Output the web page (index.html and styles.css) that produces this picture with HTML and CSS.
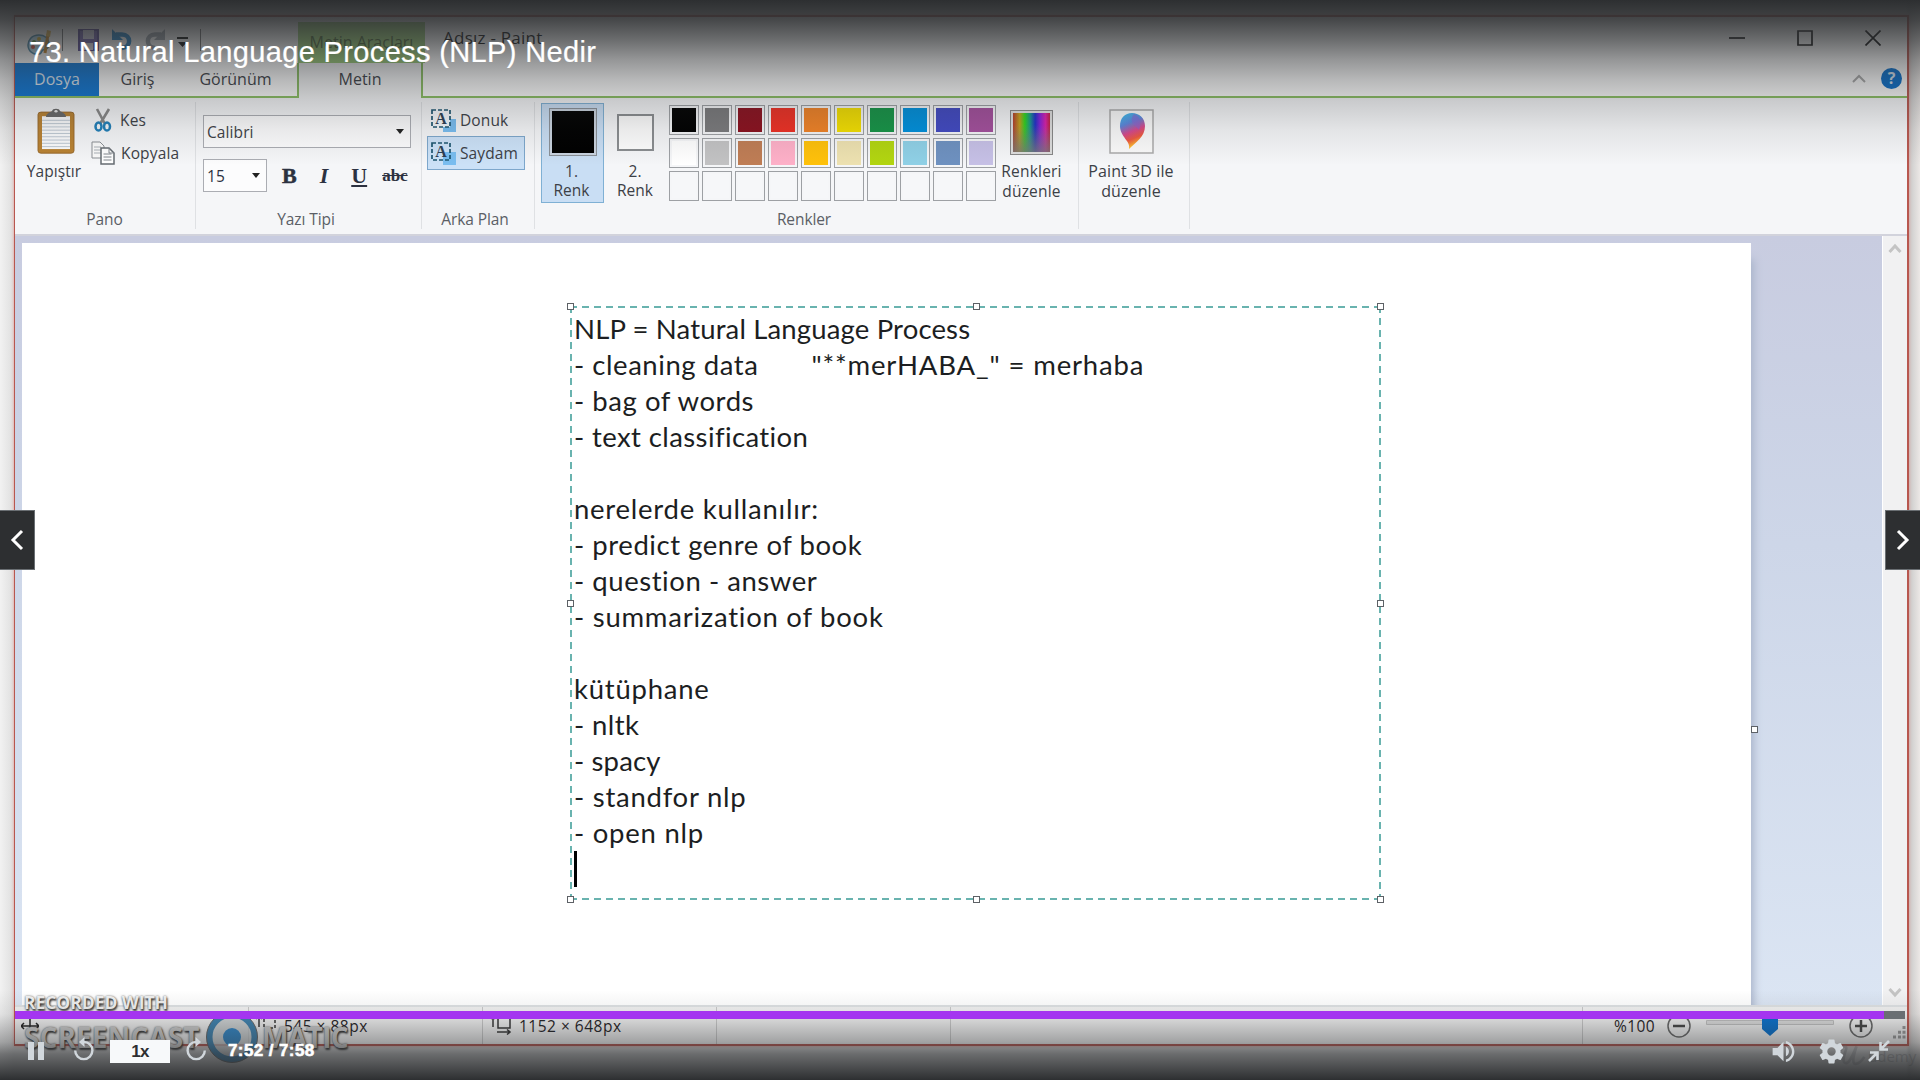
FILE: index.html
```html
<!DOCTYPE html>
<html lang="tr">
<head>
<meta charset="utf-8">
<title>73. Natural Language Process (NLP) Nedir</title>
<link rel="stylesheet" href="styles.css">
</head>
<body>
<main class="player">
  <section class="window">
    <header class="titlebar">
      <div class="quick">
        <svg class="q-paint" width="26" height="28" viewBox="0 0 26 28"><path d="M12 6C4 6 1 12 1 16c0 6 5 10 11 9 3 0 2-3 4-4 4-1 6-2 6-6 0-6-5-9-10-9z" fill="#b4d9e8" stroke="#4d8aa9" stroke-width="1.500"/><circle cx="7" cy="13" r="2" fill="#5c9b45"/><circle cx="12" cy="10" r="2" fill="#d8b130"/><circle cx="6" cy="18" r="2" fill="#cf5440"/><path d="M18 24l3-19" stroke="#c5872d" stroke-width="3"/><path d="M19 7l1-6 4 1-1 6z" fill="#e8b850"/></svg>
        <i class="bar"></i>
        <svg class="q-save" width="21" height="22" viewBox="0 0 21 22"><path d="M1 1h19v20H1z" fill="#7a6ab4" stroke="#5c4d98" stroke-width="2"/><path d="M5 1h11v9H5z" fill="#d8d4e6"/><path d="M6 14h9v7H6z" fill="#e9e7f0"/></svg>
        <svg class="q-undo" width="22" height="22" viewBox="0 0 22 22"><path d="M5 5.500h6c9.500 0 9.500 13 0 13.500" fill="none" stroke="#2a88cc" stroke-width="4.500"/><path d="M1 0v11h11z" fill="#2a88cc"/></svg>
        <svg class="q-redo" width="22" height="22" viewBox="0 0 22 22"><path d="M17 5.500h-6c-9.500 0-9.500 13 0 13.500" fill="none" stroke="#a2a9b1" stroke-width="4.500"/><path d="M21 0v11H10z" fill="#a2a9b1"/></svg>
        <svg class="q-more" width="11" height="11" viewBox="0 0 11 11"><path d="M0 0h11v2H0zM1 5h9L5.500 10z" fill="#111"/></svg>
        <i class="bar"></i>
      </div>
      <div class="context">Metin Araçları</div>
      <div class="caption">Adsız - Paint</div>
      <div class="winbtns">
        <svg width="16" height="16" viewBox="0 0 16 16"><path d="M0 8h16" stroke="#111" stroke-width="1.700"/></svg>
        <svg width="16" height="16" viewBox="0 0 16 16"><path d="M1 1h14v14H1z" fill="none" stroke="#111" stroke-width="1.700"/></svg>
        <svg width="16" height="16" viewBox="0 0 16 16"><path d="M.5.5l15 15m0-15l-15 15" stroke="#111" stroke-width="1.700"/></svg>
      </div>
    </header>
    <nav class="tabs">
      <span class="tab file">Dosya</span><span class="tab home">Giriş</span><span class="tab view">Görünüm</span><span class="tab active">Metin</span>
      <div class="tabright">
        <svg width="14" height="9" viewBox="0 0 14 9"><path d="M1 8l6-6 6 6" fill="none" stroke="#aaa" stroke-width="2"/></svg>
        <b class="help">?</b>
      </div>
    </nav>
    <div class="ribbon">
      <section class="group pano">
        <div class="body">
          <div class="paste">
            <svg width="38" height="46" viewBox="0 0 38 56" preserveAspectRatio="none"><rect x="1" y="5" width="36" height="50" rx="3" fill="#b98232"/><rect x="1" y="5" width="36" height="50" rx="3" fill="none" stroke="#95662a"/><path d="M5 10h28v40H5z" fill="#fbfcfd"/><path d="M5 15h28M5 19h28M5 23h28M5 27h28M5 31h28M5 35h28M5 39h28M5 43h28M5 47h28" stroke="#b9c5d0"/><path d="M9 11c0-4 4-6 6-7 0-4 8-4 8 0 2 1 6 3 6 7z" fill="#696969"/><circle cx="19" cy="4" r="1.600" fill="#e8e8e8"/></svg>
            <span>Yapıştır</span>
          </div>
          <div class="clips">
            <div class="row"><svg width="22" height="24" viewBox="0 0 22 24"><path d="M5 1l8 15M17 1L8 16" stroke="#888" stroke-width="2.600" fill="none"/><ellipse cx="6.500" cy="18.500" rx="3" ry="4" fill="none" stroke="#217fb8" stroke-width="2.500"/><ellipse cx="15" cy="18.500" rx="3" ry="4" fill="none" stroke="#217fb8" stroke-width="2.500"/></svg><span>Kes</span></div>
            <div class="row"><svg width="24" height="24" viewBox="0 0 24 24"><path d="M1 1h8l4 4v12H1z" fill="#fafafa" stroke="#8b8f94"/><path d="M3 6h7M3 9h7M3 12h7" stroke="#aab0b6"/><path d="M10 7h8l5 5v11H10z" fill="#fff" stroke="#666c72" stroke-width="1.500"/><path d="M18 7v5h5M12.500 13h8M12.500 16h8M12.500 19h8" fill="none" stroke="#80868c"/></svg><span>Kopyala</span></div>
          </div>
        </div>
        <footer>Pano</footer>
      </section>
      <section class="group font">
        <div class="body">
          <div class="combo wide">Calibri<i></i></div>
          <div class="line">
            <div class="combo small">15<i></i></div>
            <span class="f-b">B</span><span class="f-i">I</span><span class="f-u">U</span><span class="f-s">abc</span>
          </div>
        </div>
        <footer>Yazı Tipi</footer>
      </section>
      <section class="group back">
        <div class="body">
          <div class="opt"><svg width="25" height="23" viewBox="0 0 25 23"><path d="M12 10h13v13H12z" fill="#79bdf0"/><path d="M1 1h18v17H1z" fill="#f4f7fb" stroke="#1d5570" stroke-width="1.700" stroke-dasharray="4 2"/><text x="10" y="15" text-anchor="middle" class="glyph">A</text></svg><span>Donuk</span></div>
          <div class="opt on"><svg width="25" height="23" viewBox="0 0 25 23"><path d="M12 10h13v13H12z" fill="#79bdf0"/><path d="M1 1h18v17H1z" fill="none" stroke="#1d5570" stroke-width="1.700" stroke-dasharray="4 2"/><text x="10" y="15" text-anchor="middle" class="glyph">A</text></svg><span>Saydam</span></div>
        </div>
        <footer>Arka Plan</footer>
      </section>
      <section class="group colors">
        <div class="body">
          <div class="slot one"><i></i><span>1.<br>Renk</span></div>
          <div class="slot two"><i></i><span>2.<br>Renk</span></div>
          <div class="palette">
            <i class="c1"></i><i class="c2"></i><i class="c3"></i><i class="c4"></i><i class="c5"></i><i class="c6"></i><i class="c7"></i><i class="c8"></i><i class="c9"></i><i class="c10"></i>
            <i class="c11"></i><i class="c12"></i><i class="c13"></i><i class="c14"></i><i class="c15"></i><i class="c16"></i><i class="c17"></i><i class="c18"></i><i class="c19"></i><i class="c20"></i>
            <i></i><i></i><i></i><i></i><i></i><i></i><i></i><i></i><i></i><i></i>
          </div>
          <div class="big edit"><i class="rainbow"></i><span>Renkleri<br>düzenle</span></div>
        </div>
        <footer>Renkler</footer>
      </section>
      <section class="group p3d">
        <div class="body">
          <div class="big"><svg width="45" height="45" viewBox="0 0 45 45"><defs><linearGradient id="drop" x1="0" y1="0" x2=".3" y2="1"><stop offset="0" stop-color="#38c5ee"/><stop offset=".35" stop-color="#5b86dc"/><stop offset=".6" stop-color="#d7488c"/><stop offset=".8" stop-color="#ee5840"/><stop offset="1" stop-color="#ffc52c"/></linearGradient></defs><path d="M1 1h43v43H1z" fill="#fafafa" stroke="#aaa" stroke-width="1.500"/><path d="M20 40c2-8-9-12-9-23C11 9 16 4 23 4s13 5 13 13c0 11-9 16-16 23z" fill="url(#drop)"/><path d="M25 5c6 2 8 9 5 16-4-5-11-8-5-16z" fill="#8a63d2" opacity=".55"/></svg><span>Paint 3D ile<br>düzenle</span></div>
        </div>
      </section>
    </div>
    <div class="workspace">
      <div class="paper">
        <div class="textbox">
          <i class="h tl"></i><i class="h tc"></i><i class="h tr"></i><i class="h ml"></i><i class="h mr"></i><i class="h bl"></i><i class="h bc"></i><i class="h br"></i>
          <p class="heading">NLP = Natural Language Process</p>
          <p>- cleaning data<span class="sample">"**merHABA_" = merhaba</span></p>
          <p>- bag of words</p>
          <p class="snug">- text classification</p>
          <p></p>
          <p class="loose">nerelerde kullanılır:</p>
          <p>- predict genre of book</p>
          <p>- question - answer</p>
          <p class="loose">- summarization of book</p>
          <p></p>
          <p class="loose">kütüphane</p>
          <p class="snug">- nltk</p>
          <p class="heading">- spacy</p>
          <p class="loose">- standfor nlp</p>
          <p class="loose">- open nlp</p>
          <p class="caret"></p>
        </div>
        <i class="h edge"></i>
      </div>
      <div class="scroll">
        <svg width="14" height="12" viewBox="0 0 14 12"><path d="M1.500 9L7 3l5.500 6" fill="none" stroke="#c4c4c4" stroke-width="3"/></svg>
        <svg width="14" height="12" viewBox="0 0 14 12"><path d="M1.500 3L7 9l5.500-6" fill="none" stroke="#c4c4c4" stroke-width="3"/></svg>
      </div>
    </div>
    <footer class="status">
      <div class="cell s1"><svg width="18" height="18" viewBox="0 0 18 18"><path d="M0 9h18M9 0v14M3 6L0 9l3 3M15 6l3 3-3 3" fill="none" stroke="#222" stroke-width="1.500"/></svg></div>
      <div class="cell s2"><svg width="21" height="19" viewBox="0 0 21 19"><path d="M3 0v11M0 3l3-3 3 3" fill="none" stroke="#333" stroke-width="1.500"/><path d="M8 0h11v12H8z" fill="none" stroke="#333" stroke-width="1.500" stroke-dasharray="3 2"/></svg><span>545 × 88px</span></div>
      <div class="cell s3"><svg width="21" height="19" viewBox="0 0 21 19"><path d="M2 0v11M0 3l2-3 2 3M6 16h13M16 13.500l3 2.500-3 2.500" fill="none" stroke="#333" stroke-width="1.500"/><path d="M7 0h12v12H7z" fill="none" stroke="#333" stroke-width="1.500"/></svg><span>1152 × 648px</span></div>
      <div class="cell s4"></div>
      <div class="cell s5"></div>
      <div class="zoombar">
        <span>%100</span>
        <svg width="24" height="24" viewBox="0 0 24 24"><circle cx="12" cy="12" r="11" fill="#eee" fill-opacity=".5" stroke="#666" stroke-width="1.500"/><path d="M6 12h12" stroke="#444" stroke-width="2.500"/></svg>
        <svg class="track" width="128" height="22" viewBox="0 0 128 22"><path d="M.5 5.500h127v4H.5z" fill="#ddd" stroke="#c0c0c0"/><path d="M56 0h16v14l-8 7-8-7z" fill="#0870cc"/></svg>
        <svg width="24" height="24" viewBox="0 0 24 24"><circle cx="12" cy="12" r="11" fill="#eee" fill-opacity=".5" stroke="#666" stroke-width="1.500"/><path d="M6 12h12M12 6v12" stroke="#444" stroke-width="2.500"/></svg>
        <svg class="grip" width="13" height="13" viewBox="0 0 13 13"><path d="M9.500 0h3v3h-3zM5 4.700h3v3H5zm4.500 0h3v3h-3zM0 9.500h3v3H0zm5 0h3v3H5zm4.500 0h3v3h-3z" fill="#999"/></svg>
      </div>
    </footer>
  </section>

  <div class="recorder">
    <div class="rec-top">RECORDED WITH</div>
    <div class="rec-main"><span class="sc">SCREENCAST</span><svg width="54" height="54" viewBox="0 0 54 54"><circle cx="27" cy="27" r="22.500" fill="#c4c9cb" fill-opacity=".75" stroke="#3f83b0" stroke-width="6"/><circle cx="27" cy="27" r="25.500" fill="none" stroke="#666"/><circle cx="27" cy="27" r="9" fill="#3286c6"/></svg><span class="mt">MATIC</span></div>
  </div>
  <div class="brand"><svg width="30" height="26" viewBox="0 0 34 26"><path d="M1 9c4-8 10-9 8-3S4 21 9 21 18 8 21 2c-3 9-6 20-1 20s8-5 10-8" fill="none" stroke="#8b8b8f" stroke-width="3"/></svg><span>ûdemy</span></div>

  <div class="shade-top"></div>
  <div class="shade-bottom"></div>
  <h1 class="title">73. Natural Language Process (NLP) Nedir</h1>
  <button class="nav prev"><svg width="14" height="22" viewBox="0 0 14 22"><path d="M12 2L3 11l9 9" fill="none" stroke="#fff" stroke-width="3"/></svg></button>
  <button class="nav next"><svg width="14" height="22" viewBox="0 0 14 22"><path d="M2 2l9 9-9 9" fill="none" stroke="#fff" stroke-width="3"/></svg></button>
  <div class="bottom">
    <div class="progress"><div class="played"></div></div>
    <div class="controls">
      <svg class="pause" width="16" height="18" viewBox="0 0 16 18"><path d="M0 0h6v18H0zM10 0h6v18h-6z" fill="#d1d7dc"/></svg>
      <svg class="rew" width="22" height="25" viewBox="0 0 22 25"><path d="M2.200 13.500a8.600 8.600 0 1 0 8.600-8.600" fill="none" stroke="#d1d7dc" stroke-width="2.400"/><path d="M11.500 0v10L6 5z" fill="#d1d7dc"/></svg>
      <button class="rate">1x</button>
      <svg class="fwd" width="22" height="25" viewBox="0 0 22 25"><path d="M19.800 13.500a8.600 8.600 0 1 1-8.600-8.600" fill="none" stroke="#d1d7dc" stroke-width="2.400"/><path d="M10.500 0v10L16 5z" fill="#d1d7dc"/></svg>
      <span class="time">7:52 / 7:58</span>
      <div class="right">
        <svg width="29" height="29" viewBox="0 0 24 24"><path d="M3 9v6h4l5 5V4L7 9H3zm13.500 3A4.500 4.500 0 0 0 14 7.970v8.050c1.480-.73 2.500-2.250 2.500-4.020zM14 3.230v2.060c2.890.86 5 3.540 5 6.710s-2.110 5.850-5 6.710v2.060c4.010-.91 7-4.490 7-8.770s-2.990-7.860-7-8.770z" fill="#d1d7dc"/></svg>
        <svg width="29" height="29" viewBox="0 0 24 24"><path d="M19.430 12.980c.04-.32.07-.64.07-.98s-.03-.66-.07-.98l2.110-1.650c.19-.15.24-.42.12-.64l-2-3.460c-.12-.22-.39-.3-.61-.22l-2.490 1c-.52-.4-1.080-.73-1.690-.98l-.38-2.650A.49.490 0 0 0 14 2h-4c-.25 0-.46.18-.49.420l-.38 2.650c-.61.25-1.170.59-1.690.98l-2.490-1c-.23-.09-.49 0-.61.220l-2 3.460c-.13.22-.07.49.12.64l2.110 1.650c-.04.32-.07.65-.07.98s.03.66.07.98l-2.110 1.650c-.19.15-.24.42-.12.640l2 3.460c.12.22.39.3.61.22l2.490-1c.52.4 1.080.73 1.690.98l.38 2.650c.03.24.24.42.49.42h4c.25 0 .46-.18.49-.42l.38-2.650c.61-.25 1.170-.59 1.690-.98l2.490 1c.23.09.49 0 .61-.22l2-3.460c.12-.22.07-.49-.12-.64l-2.110-1.650zM12 15.500A3.500 3.500 0 1 1 12 8.500a3.500 3.500 0 0 1 0 7z" fill="#d1d7dc"/></svg>
        <svg width="22" height="22" viewBox="0 0 22 22"><path d="M21 1l-8 8M12.500 2v7.500H20M1 21l8-8M2 12.500h7.500V20" fill="none" stroke="#d1d7dc" stroke-width="2.600"/></svg>
      </div>
    </div>
  </div>
</main>
</body>
</html>
```
FILE: styles.css
```css
* { box-sizing: border-box; }
body { margin: 0; background: #2d2f31; }
p, h1 { margin: 0; font-weight: 400; }
svg { display: block; flex: none; }
button { margin: 0; padding: 0; }

.player {
  position: relative; width: 1920px; height: 1080px; overflow: hidden;
  padding: 15px 11px 35px 14px;
  background: linear-gradient(90deg, #f2f2f2 0, #dedede 14px, #dedede 1906px, #c9c9c9 1909px, #ece8e6 1920px);
  font-family: "Open Sans", "Noto Sans", sans-serif; font-size: 15.5px; color: #3c4046;
}
.window {
  display: flex; flex-direction: column; width: 1895px; height: 1031px;
  border: 2px solid #b8574f; border-left-width: 1px; background: #fff;
  box-shadow: 0 0 3px #e79a92;
}

/* title bar */
.titlebar { display: flex; height: 46px; color: #111; }
.quick { display: flex; width: 283px; padding: 12px 0 0 12px; align-items: flex-start; }
.quick .bar { width: 1px; height: 22px; background: #777; }
.q-paint { margin-right: 9px; }
.q-save { margin: 0 12px 0 15px; }
.q-undo { margin-right: 11px; }
.q-redo { margin-right: 11px; }
.q-more { margin: 8px 12px 0 0; }
.context { width: 127px; margin-top: 5px; padding-top: 9px; background: #9dd07a; color: #4f6b3a; font-size: 16px; text-align: center; white-space: nowrap; }
.caption { padding: 9px 0 0 18px; font-size: 17px; letter-spacing: .25px; }
.winbtns { display: flex; margin: 13px 26px 0 auto; gap: 52px; }

/* tabs */
.tabs { display: flex; height: 35px; font-size: 16px; line-height: 33px; background: linear-gradient(#8bc063, #8bc063) bottom / 100% 2px no-repeat #fff; text-align: center; }
.tab.file { width: 84px; background: #0f76d4; color: #dfe9f4; height: 33px; }
.tab.home { width: 77px; }
.tab.view { width: 121px; padding-right: 2px; }
.tab.active { width: 126px; border: 2px solid #8bc063; border-width: 0 2px; background: #f6f7f8; }
.tabright { display: flex; margin-left: auto; align-items: center; gap: 15px; padding: 0 5px 4px 0; }
.help { width: 21px; height: 21px; border-radius: 50%; background: #0a6fcc; color: #d8e6f3; font-size: 16px; line-height: 21px; }

/* ribbon */
.ribbon { display: flex; height: 138px; background: #f5f6f8; border-bottom: 2px solid #d2d3dc; }
.group { display: flex; flex-direction: column; border-right: 1px solid #dfe1e4; margin: 4px 0 5px; }
.group .body { height: 110px; }
.group footer { padding-right: 5px; text-align: center; line-height: 20px; color: #5b5f66; letter-spacing: -.1px; }
.pano { width: 181px; }
.pano .body { display: flex; }
.pano footer { padding-right: 1px; }
.paste { display: flex; flex-direction: column; align-items: center; width: 78px; padding-top: 6px; line-height: 34px; letter-spacing: .1px; }
.paste svg { margin-left: 3px; }
.clips { padding-top: 3px; margin-left: -2px; }
.row { display: flex; align-items: center; height: 33px; gap: 6px; line-height: 24px; letter-spacing: .15px; }
.row:first-child { height: 29px; padding-left: 1px; margin-bottom: 2px; }
.font { width: 226px; }
.font .body { padding: 13px 10px 0 7px; }
.font .combo { letter-spacing: .1px; }
.combo { display: flex; justify-content: space-between; align-items: center; height: 33px; padding: 0 6px 0 3px; border: 1px solid #abadb3; background: #fcfcfd; }
.combo i { border: 4px solid transparent; border-top: 5px solid #222; border-bottom: 0; }
.combo.small { width: 64px; padding-left: 3px; }
.line { display: flex; margin-top: 11px; align-items: center; font-family: "Liberation Serif", serif; font-size: 22px; color: #2c3140; }
.line .combo { font: 15.5px "Open Sans", sans-serif; }
.f-b { margin-left: 15px; font-weight: 700; -webkit-text-stroke: .5px; }
.f-i { margin-left: 23px; font-style: italic; font-weight: 700; }
.f-u { margin-left: 23px; font-weight: 700; text-decoration: underline; }
.f-s { margin-left: 15px; font-size: 17px; font-weight: 700; text-decoration: line-through; }
.back { width: 113px; }
.back .body { padding: 2px 7px 0 5px; }
.back footer { padding-right: 6px; }
.opt { display: flex; align-items: center; height: 32px; gap: 4px; padding-left: 3px; border: 1px solid transparent; letter-spacing: .1px; }
.opt.on { width: 98px; height: 34px; background: #cbe1f7; border-color: #7da7cc; }
.glyph { font: 700 16px "Liberation Serif", serif; fill: #2d3f55; }
.colors { width: 544px; }
.colors .body { display: flex; padding-left: 6px; }
.slot { display: flex; flex-direction: column; align-items: center; width: 63px; text-align: center; line-height: 19px; }
.slot.one { height: 100px; margin-top: 1px; padding-top: 4px; border: 1px solid #7fb0d4; background: #c9def4; }
.slot.one span { padding-right: 2px; }
.slot.one i { width: 48px; height: 48px; margin-bottom: 6px; border: 1px solid #8a9097; background: #000; box-shadow: inset 0 0 0 2px #c9d3df; }
.slot.two { padding-top: 12px; }
.slot.two span { padding-right: 1px; }
.slot.two i { width: 37px; height: 37px; margin-bottom: 11px; border: 2px solid #8a8d90; background: #fdfdfd; }
.palette { display: grid; grid-template-columns: repeat(10, 30px); grid-auto-rows: 30px; gap: 3px; padding: 3px 0 0 2px; }
.palette i { border: 1.500px solid #9da0a4; padding: 2px; background: #f6f7f9; background-clip: content-box; }
.big { display: flex; flex-direction: column; align-items: center; text-align: center; line-height: 19.5px; }
.edit { width: 71px; padding-top: 8px; letter-spacing: .2px; }
.rainbow { width: 43px; height: 45px; margin-bottom: 7px; border: 1px solid #888; padding: 2px; background: linear-gradient(transparent 30%, #777c) content-box, linear-gradient(90deg, #b33c2c, #c0a01c 18%, #2fd31e 32%, #199a8a 46%, #2030c8 60%, #8a20d8 74%, #d820a8 88%, #c02040) content-box, #ddd; }
.p3d { width: 111px; padding: 7px 6px 0 0; }
.p3d .big { font-size: 16px; letter-spacing: .1px; }
.p3d svg { margin-bottom: 8px; }
.c1 { background-color: #000 !important; } .c2 { background-color: #7a7a7c !important; } .c3 { background-color: #8b111f !important; } .c4 { background-color: #ee3024 !important; } .c5 { background-color: #f08226 !important; }
.c6 { background-color: #f3df00 !important; } .c7 { background-color: #169447 !important; } .c8 { background-color: #0090dc !important; } .c9 { background-color: #4149c2 !important; } .c10 { background-color: #a34f9c !important; }
.c11 { background-color: #fff !important; } .c12 { background-color: #c2c2c3 !important; } .c13 { background-color: #bf7d55 !important; } .c14 { background-color: #feb0c8 !important; } .c15 { background-color: #ffc10a !important; }
.c16 { background-color: #ede1b0 !important; } .c17 { background-color: #b2d510 !important; } .c18 { background-color: #8fd0e6 !important; } .c19 { background-color: #6e91c0 !important; } .c20 { background-color: #c6c0e6 !important; }

/* canvas */
.workspace { display: flex; flex: 1; padding-left: 7px; background: linear-gradient(#c8cce0, #cdd6e8 40%, #dbe5f3); }
.paper { position: relative; width: 1729px; margin-top: 7px; background: #fff; box-shadow: 5px 14px 8px -2px #aab5cb; clip-path: inset(0 -14px 0 0); }
.scroll { display: flex; flex-direction: column; justify-content: space-between; align-items: center; width: 25px; margin-left: auto; padding: 7px 0 7px; border-left: 1px solid #fff; background: #f1f1f2; }
.textbox {
  position: absolute; left: 548px; top: 63px; width: 811px; height: 594px; padding: 5px 0 0 4px;
  background:
    repeating-linear-gradient(90deg, #69b3af 0 7px, #fff 7px 12px) top / 100% 2px no-repeat,
    repeating-linear-gradient(90deg, #69b3af 0 7px, #fff 7px 12px) bottom / 100% 2px no-repeat,
    repeating-linear-gradient(#69b3af 0 7px, #fff 7px 12px) left / 2px 100% no-repeat,
    repeating-linear-gradient(#69b3af 0 7px, #fff 7px 12px) right / 2px 100% no-repeat;
  font-family: Lato, "Open Sans", sans-serif; font-size: 27.5px; letter-spacing: .55px; line-height: 36px; color: #1c1e22;
}
.textbox p { height: 36px; white-space: pre; }
.textbox .heading { letter-spacing: .15px; }
.textbox .snug { letter-spacing: .4px; }
.textbox .loose { letter-spacing: .75px; }
.sample { margin-left: 53px; letter-spacing: .85px; }
.caret { width: 3px; background: #000; }
.h { position: absolute; width: 7px; height: 7px; border: 1.500px solid #5d6166; background: #fff; }
.tl { left: -3px; top: -3px; } .tc { left: 403px; top: -3px; } .tr { right: -3px; top: -3px; }
.ml { left: -3px; top: 294px; } .mr { right: -3px; top: 294px; }
.bl { left: -3px; bottom: -3px; } .bc { left: 403px; bottom: -3px; } .br { right: -3px; bottom: -3px; }
.edge { left: 1729px; top: 483px; }

/* status bar */
.status { display: flex; height: 39px; border-top: 2px solid #dde0e2; background: #f0f0f0; color: #1f2124; }
.cell { display: flex; align-items: center; gap: 7px; border-right: 1px solid #c8c8c8; letter-spacing: .5px; }
.s1 { width: 234px; padding-left: 6px; }
.s2 { width: 234px; padding-left: 7px; }
.s3 { width: 234px; padding-left: 8px; }
.s4 { width: 234px; } .s5 { width: 632px; }
.zoombar { display: flex; align-items: center; padding-left: 31px; }
.zoombar span { width: 53px; letter-spacing: .4px; }
.track { margin: 0 15px; }
.grip { margin: 14px 0 0 20px; }

/* watermarks */
.recorder { position: absolute; left: 24px; top: 990px; color: #eee; font-weight: 700; text-shadow: 1px 2px 2px #333, 0 0 2px #555; }
.rec-top { font-size: 17.5px; line-height: 24px; letter-spacing: -.05px; }
.rec-main { display: flex; align-items: center; margin-top: -4px; color: #ccc; font-size: 28px; line-height: 54px; }
.sc { width: 181px; letter-spacing: .1px; }
.mt { margin-left: 3px; letter-spacing: -.6px; }
.brand { position: absolute; left: 1838px; top: 1043px; display: flex; align-items: center; color: #77777b; font-size: 15px; opacity: .4; }

/* player chrome */
.shade-top { position: absolute; inset: 0 0 auto; height: 165px; background: linear-gradient(rgba(45,47,49,1) 0, rgba(45,47,49,.88) 20px, rgba(45,47,49,.7) 40px, rgba(45,47,49,.5) 60px, rgba(45,47,49,.34) 80px, rgba(45,47,49,.22) 100px, rgba(45,47,49,.09) 130px, rgba(45,47,49,0)); }
.shade-bottom { position: absolute; inset: auto 0 0; height: 90px; background: linear-gradient(rgba(45,47,49,0), rgba(45,47,49,.08) 24px, rgba(45,47,49,.4) 52px, rgba(45,47,49,.65) 64px, rgba(45,47,49,1) 90px); }
.title { position: absolute; left: 29px; top: 34px; font: 29px/36px "Liberation Sans", Arial, sans-serif; letter-spacing: .36px; -webkit-text-stroke: .2px #fff; color: #fff; white-space: nowrap; }
.nav { position: absolute; top: 510px; width: 35px; height: 60px; display: flex; align-items: center; justify-content: center; border: 1px solid #6a6f73; background: #2d2f31; }
.prev { left: 0; border-left: 0; }
.next { right: 0; border-right: 0; }
.bottom { position: absolute; left: 15px; right: 15px; top: 1011px; }
.progress { height: 8px; background: #6a6f73; }
.played { width: 1869px; height: 8px; background: #a435f0; }
.controls { display: flex; align-items: center; height: 64px; padding-left: 13px; color: #fff; font-family: "Liberation Sans", Arial, sans-serif; font-weight: 700; }
.rew { margin: -3px 15px 0 29px; }
.rate { width: 60px; height: 23px; border: 0; background: #f7f9fa; color: #2d2f31; font: 700 17px/23px "Liberation Sans", Arial, sans-serif; letter-spacing: -.8px; }
.fwd { margin: -3px 21px 0 15px; }
.time { font-size: 17px; letter-spacing: .4px; -webkit-text-stroke: .6px #fff; }
.right { display: flex; align-items: center; gap: 19px; margin: 0 15px 0 auto; }
.right svg:nth-child(2) { margin-right: 3px; }
```
